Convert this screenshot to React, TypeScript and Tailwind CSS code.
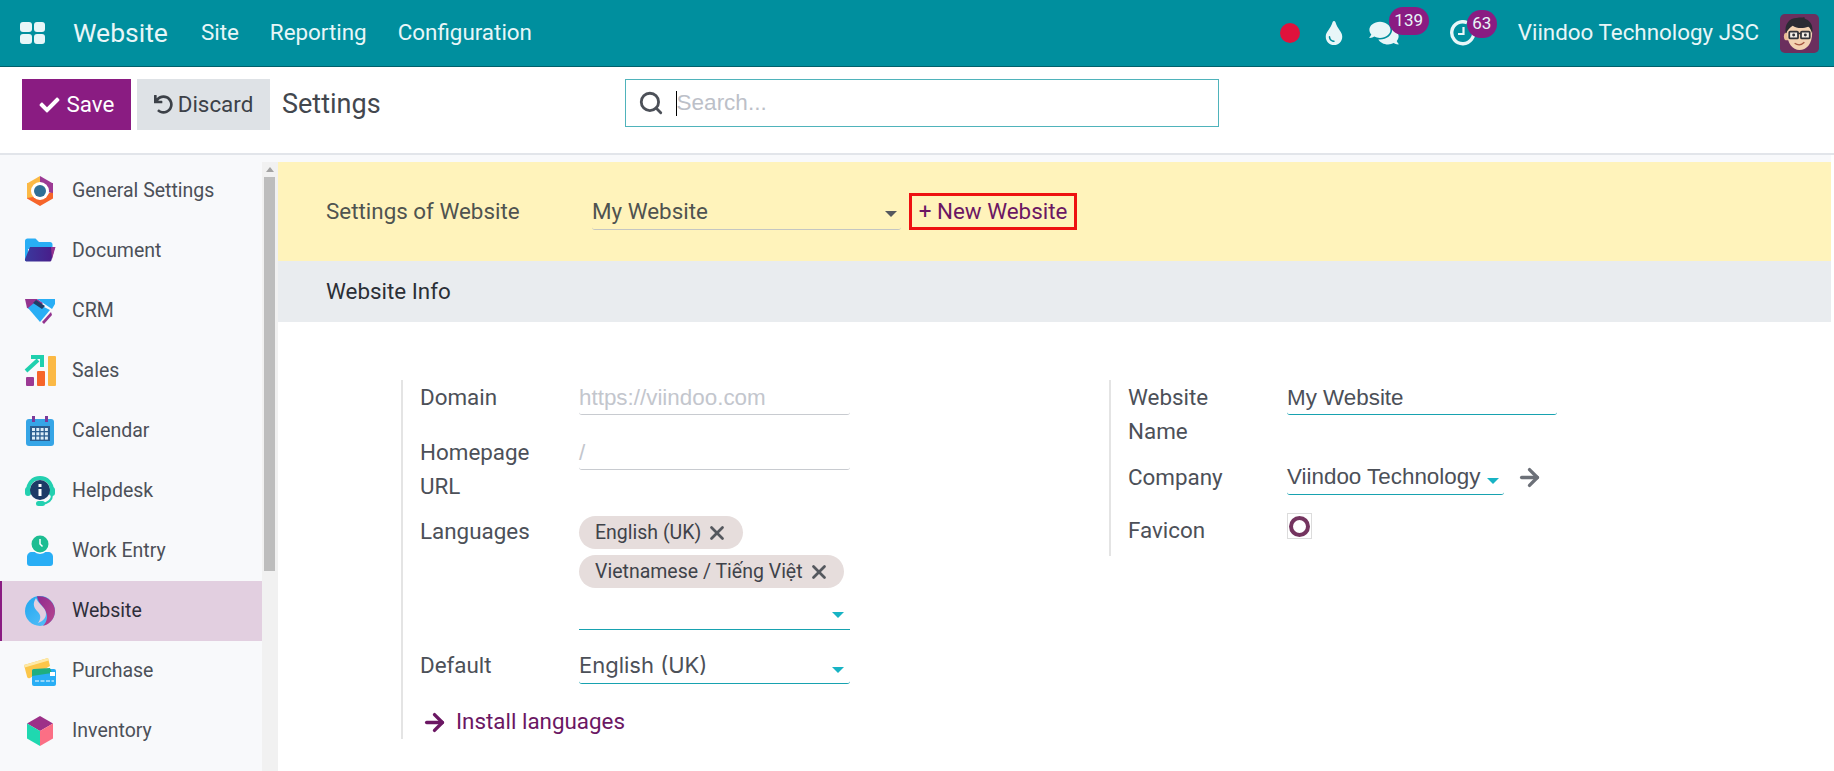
import { ArrowRight, Search, X } from "lucide-react";
import { FaCheck, FaComments, FaTint, FaUndo } from "react-icons/fa";
import type { ReactNode } from "react";

// 사이드바 앱 아이콘
function HexIcon() {
  return (
    <svg viewBox="0 0 32 32" className="h-8 w-8">
      <path d="M16 1 3 8.500V16l13-7z" fill="#fbb945" />
      <path d="M16 1l13 7.500V16L16 9z" fill="#9c3a94" />
      <path d="M3 16v7.500L16 31l13-7.500V16l-13 7z" fill="#f6652a" />
      <path d="M3 8h6v14l-6 1z" fill="#fbb945" />
      <path d="M23 8h6v10l-6-1z" fill="#9c3a94" />
      <circle cx="16" cy="16" r="9" fill="#fff" />
      <circle cx="16" cy="16" r="6" fill="#2f6f96" />
    </svg>
  );
}

function FolderIcon() {
  return (
    <svg viewBox="0 0 32 32" className="h-8 w-8">
      <defs>
        <linearGradient id="fold" x1="0" y1="0" x2="1" y2="0">
          <stop offset="0" stopColor="#3a3a9e" />
          <stop offset="1" stopColor="#4a1a88" />
        </linearGradient>
      </defs>
      <path d="M1 6c0-1.500 1-2.500 2.500-2.500h8l3.500 3.500h11c1.500 0 2.500 1 2.500 2.500V14H1z" fill="#29aef5" />
      <path d="M1 12h3v14H1z" fill="#29aef5" />
      <path d="M6 12h25l-3.500 13c-.3 1-1 1.500-2 1.500H3c-1.500 0-2.300-1-2-2.300z" fill="url(#fold)" />
      <path d="M27 12h4.500L28 24z" fill="#93348f" />
    </svg>
  );
}

function ShakeIcon() {
  return (
    <svg viewBox="0 0 32 32" className="h-8 w-8">
      <path d="M1 4h12l6 4-7 8-9-3z" fill="#93348f" />
      <path d="M13 4h18v5l-3 5-9-6z" fill="#29aef5" />
      <path d="M4 13l6-5 6 2 10 5-10 12z" fill="#29aef5" />
      <path d="M12 5l9 6-3 3-9-6z" fill="#1f3d66" />
      <path d="M18 27l9-10 1 3-8 9z" fill="#93348f" />
    </svg>
  );
}

function SalesIcon() {
  return (
    <svg viewBox="0 0 32 32" className="h-8 w-8">
      <rect x="2" y="22" width="8" height="9" rx="1" fill="#9c3a94" />
      <rect x="13" y="16" width="8" height="15" rx="1" fill="#f6652a" />
      <rect x="24" y="1" width="8" height="30" rx="1" fill="#fbb945" />
      <path d="M2 16 14 5M7 2h11v10" fill="none" stroke="#1fd0ae" strokeWidth="4" />
    </svg>
  );
}

function CalendarIcon() {
  const cells = [0, 1, 2, 3].flatMap((c) => [0, 1, 2].map((r) => [8 + c * 4.300, 13 + r * 4.300]));
  return (
    <svg viewBox="0 0 32 32" className="h-8 w-8">
      <rect x="2" y="4" width="28" height="27" rx="3" fill="#36a5e6" />
      <rect x="8" y="1" width="3" height="6" fill="#7a3a9a" />
      <rect x="21" y="1" width="3" height="6" fill="#7a3a9a" />
      <rect x="6" y="11" width="20" height="15" fill="#2a5d8f" />
      {cells.map(([x, y]) => (
        <rect key={`${x}-${y}`} x={x} y={y} width="3" height="3" fill="#dcecf7" />
      ))}
    </svg>
  );
}

function HelpdeskIcon() {
  return (
    <svg viewBox="0 0 32 32" className="h-8 w-8">
      <path d="M4 16C4 8 9 3 16 3s12 5 12 13" fill="none" stroke="#23d0b0" strokeWidth="4" />
      <rect x="1" y="12" width="6" height="9" rx="3" fill="#23d0b0" />
      <rect x="25" y="12" width="6" height="9" rx="3" fill="#23d0b0" />
      <path d="M28 20c0 5-4 8-10 9" fill="none" stroke="#23d0b0" strokeWidth="2" />
      <rect x="12" y="26" width="9" height="5" rx="2.500" fill="#23d0b0" />
      <circle cx="16" cy="15" r="10" fill="#1d3a66" />
      <rect x="14.500" y="14" width="3" height="7" fill="#fff" />
      <rect x="14.500" y="9" width="3" height="3" fill="#fff" />
    </svg>
  );
}

function WorkEntryIcon() {
  return (
    <svg viewBox="0 0 32 32" className="h-8 w-8">
      <path d="M3 22c0-3 2-5 5-5h16c3 0 5 2 5 5v6c0 2-1 3-3 3H6c-2 0-3-1-3-3z" fill="#29aef5" />
      <circle cx="16" cy="10" r="9" fill="#fff" />
      <circle cx="16" cy="9" r="8.500" fill="#1dbd92" />
      <path d="M16 4v5l2.500 2.500" fill="none" stroke="#fff" strokeWidth="1.500" />
    </svg>
  );
}

function WebsiteIcon() {
  return (
    <svg viewBox="0 0 32 32" className="h-8 w-8">
      <defs>
        <linearGradient id="wsb" x1="0" y1="0" x2="1" y2="1">
          <stop offset="0" stopColor="#1fa6ee" />
          <stop offset="1" stopColor="#5cc2fa" />
        </linearGradient>
        <linearGradient id="wsp" x1="0" y1="0" x2="1" y2="1">
          <stop offset="0" stopColor="#8f2a8f" />
          <stop offset="1" stopColor="#b8488f" />
        </linearGradient>
      </defs>
      <circle cx="16" cy="16" r="15" fill="url(#wsb)" />
      <path d="M13 1.300C24 0 31 8 31 16c0 8-6 14-12 14.700 5-4.700 5-10.700 2-15.700C19 11 14 8 13 1.300z" fill="url(#wsp)" />
      <path d="M12 3C8 9 10 13 14 17c3 3 3 7 0 11 6-2 10-7 7-13-2-4-7-7-9-12z" fill="#e2cfe0" />
    </svg>
  );
}

function PurchaseIcon() {
  return (
    <svg viewBox="0 0 32 32" className="h-8 w-8">
      <path d="M0 10 24 3l2 8-20 12c-2 .5-2.500 0-3-1.500z" fill="#fbc64a" />
      <path d="M0 10 24 3l.7 2.500L.7 12.500z" fill="#fde9a8" />
      <rect x="8" y="14" width="24" height="17" rx="2" fill="#29aef5" />
      <path d="M8 16c0-1 1-2 2-2l16-1 2 5-20 3z" fill="#1fae80" />
      <rect x="26" y="17" width="5" height="4" fill="#fff" />
      <path d="M11 26h19" stroke="#fff" strokeWidth="1.200" strokeDasharray="4 1.500" />
    </svg>
  );
}

function InventoryIcon() {
  return (
    <svg viewBox="0 0 32 32" className="h-8 w-8">
      <path d="M16 1 29 8.500 16 16 3 8.500z" fill="#9c3088" />
      <path d="M3 8.500 16 16v15L3 23.500z" fill="#1fd8b0" />
      <path d="M29 8.500 16 16v15l13-7.500z" fill="#fb6f85" />
    </svg>
  );
}

const APPS: { name: string; icon: ReactNode; active?: boolean }[] = [
  { name: "General Settings", icon: <HexIcon /> },
  { name: "Document", icon: <FolderIcon /> },
  { name: "CRM", icon: <ShakeIcon /> },
  { name: "Sales", icon: <SalesIcon /> },
  { name: "Calendar", icon: <CalendarIcon /> },
  { name: "Helpdesk", icon: <HelpdeskIcon /> },
  { name: "Work Entry", icon: <WorkEntryIcon /> },
  { name: "Website", icon: <WebsiteIcon />, active: true },
  { name: "Purchase", icon: <PurchaseIcon /> },
  { name: "Inventory", icon: <InventoryIcon /> },
];

function Avatar() {
  return (
    <svg viewBox="0 0 40 40" className="ml-[21px] h-[39px] w-[39px]">
      <rect width="40" height="40" rx="5" fill="#6b2f5e" />
      <ellipse cx="7" cy="23" rx="3" ry="4" fill="#e9bd96" />
      <path d="M7 18c0-8 6-10 13-10s13 3 13 11c0 12-6 18-13 18S7 30 7 18z" fill="#f3d2b2" />
      <path d="M6 20C4 10 10 4 17 4c4-1 6 0 8-1 0 2 1 2 3 3 5 3 6 9 5 14-1-3-2-6-4-7-5 2-12 2-16-1-3 2-5 4-7 8z" fill="#2b2b33" />
      <rect x="9.500" y="18" width="9" height="7" rx="1" fill="#f5efe8" stroke="#33333a" strokeWidth="1.800" />
      <rect x="21.500" y="18" width="9" height="7" rx="1" fill="#f5efe8" stroke="#33333a" strokeWidth="1.800" />
      <path d="M18 20h4" stroke="#33333a" strokeWidth="1.500" />
      <circle cx="14" cy="21.500" r="1.500" fill="#33333a" />
      <circle cx="26" cy="21.500" r="1.500" fill="#33333a" />
      <path d="M15 30c3 2 7 2 10-1" fill="none" stroke="#a4533f" strokeWidth="1.300" />
    </svg>
  );
}

function ClockRing() {
  return (
    <svg viewBox="0 0 26 26" className="h-[26px] w-[26px]">
      <path d="M17 2.600A11 11 0 1 0 23.400 10" fill="none" stroke="#e8f6f8" strokeWidth="3.400" />
      <path d="M13.500 7v7H8" fill="none" stroke="#e8f6f8" strokeWidth="2.200" />
    </svg>
  );
}

function Caret({ className }: { className: string }) {
  return <span className={`h-0 w-0 border-x-[6px] border-t-[6px] border-x-transparent ${className}`} />;
}

function Label({ children, className = "" }: { children: ReactNode; className?: string }) {
  return <div className={`text-[22.400px] leading-[34px] text-[#4c5058] ${className}`}>{children}</div>;
}

function Tag({ text, className }: { text: string; className: string }) {
  return (
    <div className={`flex h-[33px] items-center rounded-full bg-[#e6dddc] pl-[16px] text-[19.500px] text-[#3f434a] ${className}`}>
      <span>{text}</span>
      <X className="ml-[5px] h-[22px] w-[22px] text-[#55585e]" strokeWidth={3} />
    </div>
  );
}

export default function App() {
  return (
    <div className="flex h-[771px] w-[1834px] flex-col overflow-hidden bg-white font-['Roboto',sans-serif]">
      {/* 상단 내비게이션 */}
      <header className="flex h-[67px] shrink-0 items-center border-b border-[#00606b] bg-[#008f9e] text-[#e8f6f8]">
        <div className="ml-[20px] grid h-[22px] w-[25px] grid-cols-2 gap-[2px]">
          <span className="rounded-[3px] bg-[#e8f6f8]" />
          <span className="rounded-[3px] bg-[#e8f6f8]" />
          <span className="rounded-[3px] bg-[#e8f6f8]" />
          <span className="rounded-[3px] bg-[#e8f6f8]" />
        </div>
        <span className="ml-[28px] text-[26.500px]">Website</span>
        <span className="ml-[33px] text-[22.400px]">Site</span>
        <span className="ml-[31px] text-[22.400px]">Reporting</span>
        <span className="ml-[31px] text-[22.400px]">Configuration</span>

        <span className="ml-auto h-5 w-5 rounded-full bg-[#e0123c]" />
        <FaTint className="ml-[25px] h-6 w-[18px]" />
        <div className="relative ml-[26px] flex">
          <FaComments className="h-[26px] w-[30px]" />
          <span className="absolute -top-[13px] left-[20px] flex h-[28px] w-[40px] items-center justify-center rounded-full bg-[#8a1c82] text-[17px]">139</span>
        </div>
        <div className="relative ml-[51px] flex">
          <ClockRing />
          <span className="absolute -top-[10px] left-[17px] flex h-[28px] w-[30px] items-center justify-center rounded-full bg-[#8a1c82] text-[17px]">63</span>
        </div>
        <span className="ml-[42px] text-[22.400px]">Viindoo Technology JSC</span>
        <Avatar />
        <span className="w-[15px]" />
      </header>

      {/* 컨트롤 패널 */}
      <div className="flex h-[88px] shrink-0 items-start border-b-2 border-[#e2e5ea] pt-[12px] pl-[22px]">
        <button className="flex h-[51px] w-[109px] items-center justify-center gap-[7px] bg-[#8a1c82] text-[22.400px] text-white">
          <FaCheck className="h-[20px] w-[21px]" />
          Save
        </button>
        <button className="ml-[6px] flex h-[51px] w-[133px] items-center justify-center gap-[5px] bg-[#dee2e6] text-[22.400px] text-[#3c4148]">
          <FaUndo className="h-[19px] w-[19px]" />
          Discard
        </button>
        <span className="ml-[12px] self-start text-[27px] leading-[51px] text-[#43474e]">Settings</span>
        <div className="ml-[244px] flex h-[48px] w-[594px] items-center border-[1.500px] border-[#4fb3bb] pl-[12px] font-['Liberation_Sans',sans-serif]">
          <Search className="h-[26px] w-[26px] text-[#4c5058]" strokeWidth={2.600} />
          <span className="ml-[12px] h-[25px] w-px bg-black" />
          <span className="text-[22.500px] text-[#bcc0c8]">Search...</span>
        </div>
      </div>

      <div className="flex min-h-0 flex-1">
        {/* 앱 사이드바 */}
        <aside className="w-[262px] shrink-0 bg-[#f8f9fb] pt-[6px]">
          {APPS.map((app) => (
            <div
              key={app.name}
              className={`flex h-[60px] items-center gap-[16px] text-[19.500px] ${
                app.active ? "border-l-2 border-[#8a1c82] bg-[#e2cfe0] pl-[22px] text-[#2e2e3a]" : "pl-[24px] text-[#4c5058]"
              }`}
            >
              {app.icon}
              <span>{app.name}</span>
            </div>
          ))}
        </aside>

        {/* 스크롤바 */}
        <div className="flex w-[16px] shrink-0 flex-col bg-[#f8f9fb] pt-[7px]">
          <div className="flex h-[15px] items-center justify-center bg-[#f1f1f1]">
            <span className="h-0 w-0 border-x-[4px] border-b-[5px] border-x-transparent border-b-[#a3a3a3]" />
          </div>
          <div className="flex flex-1 flex-col bg-[#f1f1f1]">
            <div className="ml-[2px] h-[394px] w-[11px] bg-[#bdbdbd]" />
          </div>
        </div>

        {/* 설정 본문 */}
        <main className="mr-[3px] flex-1 bg-[#f8f9fb] pt-[7px]">
          <div className="flex h-[99px] items-center bg-[#fff3bb] pl-[48px]">
            <span className="w-[266px] text-[22.400px] text-[#4f5350]">Settings of Website</span>
            <div className="flex h-[36px] w-[309px] items-center justify-between rounded-b-[3px] border-b border-[#c4c6c2] pt-[2px] pr-[4px] text-[22.400px] text-[#4f5350]">
              <span>My Website</span>
              <Caret className="mt-[4px] border-t-[#55585e]" />
            </div>
            <div className="ml-[8px] flex h-[37px] w-[168px] items-center justify-center border-[3px] border-[#ee1111] text-[22.400px] whitespace-nowrap text-[#6b1763]">
              + New Website
            </div>
          </div>
          <div className="flex h-[61px] items-center bg-[#e9ecef] pl-[48px] text-[22.400px] text-[#2b2f36]">Website Info</div>

          <div className="flex h-full items-start bg-white pt-[58px] pl-[123px]">
            {/* 왼쪽 열 */}
            <section className="w-[708px] border-l-2 border-[#e4e4e4] pl-[17px]">
              <div className="grid grid-cols-[159px_271px]">
                <Label>Domain</Label>
                <div className="h-[35px] rounded-b-[3px] border-b border-[#c8cbd0] font-['Liberation_Sans',sans-serif] text-[22.400px] leading-[36px] text-[#c3c6cd]">
                  https://viindoo.com
                </div>
              </div>
              <div className="mt-[20px] grid grid-cols-[159px_271px]">
                <Label>
                  Homepage
                  <br />
                  URL
                </Label>
                <div className="h-[35px] rounded-b-[3px] border-b border-[#c8cbd0] font-['Liberation_Sans',sans-serif] text-[22.400px] leading-[36px] text-[#c3c6cd]">
                  /
                </div>
              </div>
              <div className="mt-[11px] grid grid-cols-[159px_271px]">
                <Label>Languages</Label>
                <div className="pt-[2px]">
                  <Tag text="English (UK)" className="w-[164px]" />
                  <Tag text="Vietnamese / Tiếng Việt" className="mt-[6px] w-[265px]" />
                  <div className="flex h-[42px] items-end justify-end border-b border-[#17a2b0] pr-[6px] pb-[11px]">
                    <Caret className="border-t-[#17b3c4]" />
                  </div>
                </div>
              </div>
              <div className="mt-[18px] grid grid-cols-[159px_271px]">
                <Label>Default</Label>
                <div className="flex h-[36px] items-center justify-between rounded-b-[3px] border-b border-[#17a2b0] pr-[6px] font-['Inter',sans-serif] text-[22px] text-[#4c5058]">
                  <span>English (UK)</span>
                  <Caret className="mt-[8px] border-t-[#17b3c4]" />
                </div>
              </div>
              <div className="mt-[21px] flex h-[34px] items-center pl-[1px] text-[22.400px] text-[#6b1763]">
                <ArrowRight className="h-[27px] w-[27px]" strokeWidth={3} />
                <span className="ml-[8px]">Install languages</span>
              </div>
            </section>

            {/* 오른쪽 열 */}
            <section className="w-[708px] border-l-2 border-[#e4e4e4] pb-[9px] pl-[17px]">
              <div className="grid grid-cols-[159px_270px]">
                <Label>
                  Website
                  <br />
                  Name
                </Label>
                <div className="h-[35px] rounded-b-[3px] border-b border-[#17a2b0] font-['Liberation_Sans',sans-serif] text-[22.400px] leading-[36px] text-[#4c5058]">
                  My Website
                </div>
              </div>
              <div className="mt-[12px] grid grid-cols-[159px_270px]">
                <Label>Company</Label>
                <div className="flex items-center">
                  <div className="flex h-[35px] w-[217px] items-center justify-between rounded-b-[3px] border-b border-[#17a2b0] pr-[5px] font-['Liberation_Sans',sans-serif] text-[22.400px] whitespace-nowrap text-[#4c5058]">
                    <span>Viindoo Technology</span>
                    <Caret className="mt-[8px] border-t-[#17b3c4]" />
                  </div>
                  <ArrowRight className="ml-[12px] h-[27px] w-[27px] text-[#6c7078]" strokeWidth={3} />
                </div>
              </div>
              <div className="mt-[18px] grid grid-cols-[159px_270px]">
                <Label>Favicon</Label>
                <div className="flex h-[26px] w-[25px] items-center justify-center border border-[#dcdcdc]">
                  <span className="h-[21px] w-[21px] rounded-full border-[4px] border-[#74345f]" />
                </div>
              </div>
            </section>
          </div>
        </main>
      </div>
    </div>
  );
}
